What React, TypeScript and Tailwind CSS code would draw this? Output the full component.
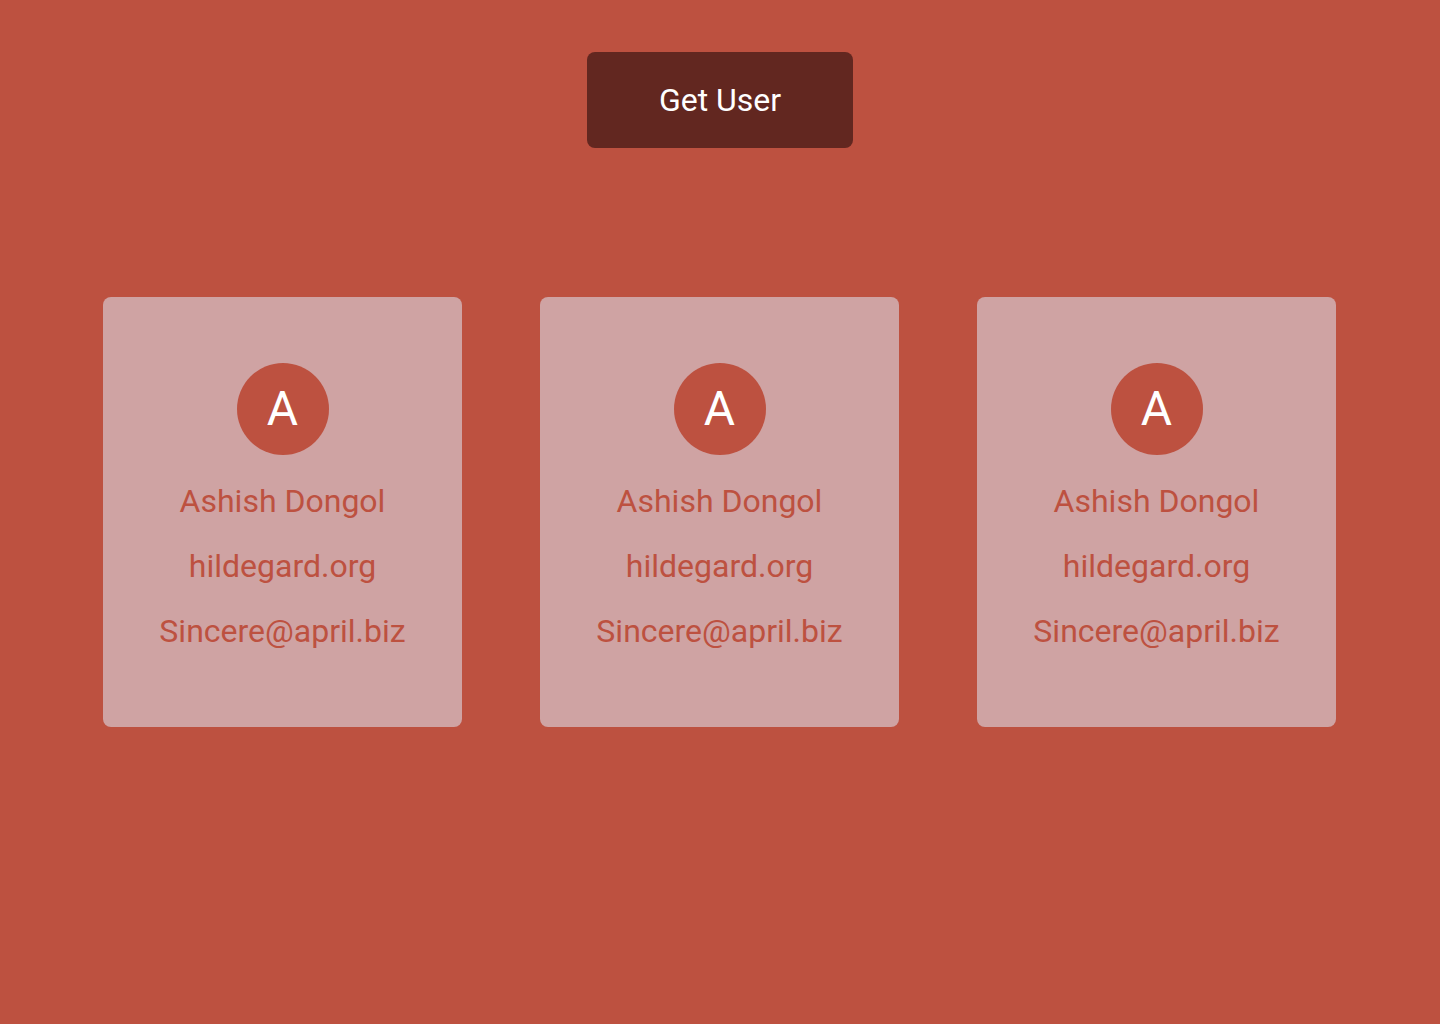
import React from 'react';

const users = [1, 2, 3].map((id) => ({
    id,
    name: 'Ashish Dongol',
    website: 'hildegard.org',
    email: 'Sincere@april.biz',
}));

function UserCard({ name, website, email }: { name: string; website: string; email: string }) {
    return (
        <div className="w-[359px] h-[430px] bg-[#cfa3a3] rounded-lg flex flex-col items-center pt-[66px]">
            {/* Avatar */}
            <div className="w-[92px] h-[92px] rounded-full bg-[#bd5140] flex items-center justify-center text-white text-[48px] leading-none">
                {name.charAt(0)}
            </div>
            <div className="mt-[24px] flex flex-col items-center gap-[20px] text-[#bd5140] text-[32px] leading-[45px]">
                <p>{name}</p>
                <p>{website}</p>
                <p>{email}</p>
            </div>
        </div>
    );
}

export default function App() {
    return (
        <div className="min-h-screen bg-[#bd5140] flex flex-col items-center pt-[52px] font-['Roboto',sans-serif]">
            <button className="w-[266px] h-[96px] rounded-lg bg-[#622720] text-white text-[32px]">
                Get User
            </button>

            {/* pr-px keeps the odd-width row on whole pixels */}
            <div className="mt-[149px] pr-px flex justify-center gap-[78px]">
                {users.map((u) => (
                    <UserCard key={u.id} name={u.name} website={u.website} email={u.email} />
                ))}
            </div>
        </div>
    );
}
